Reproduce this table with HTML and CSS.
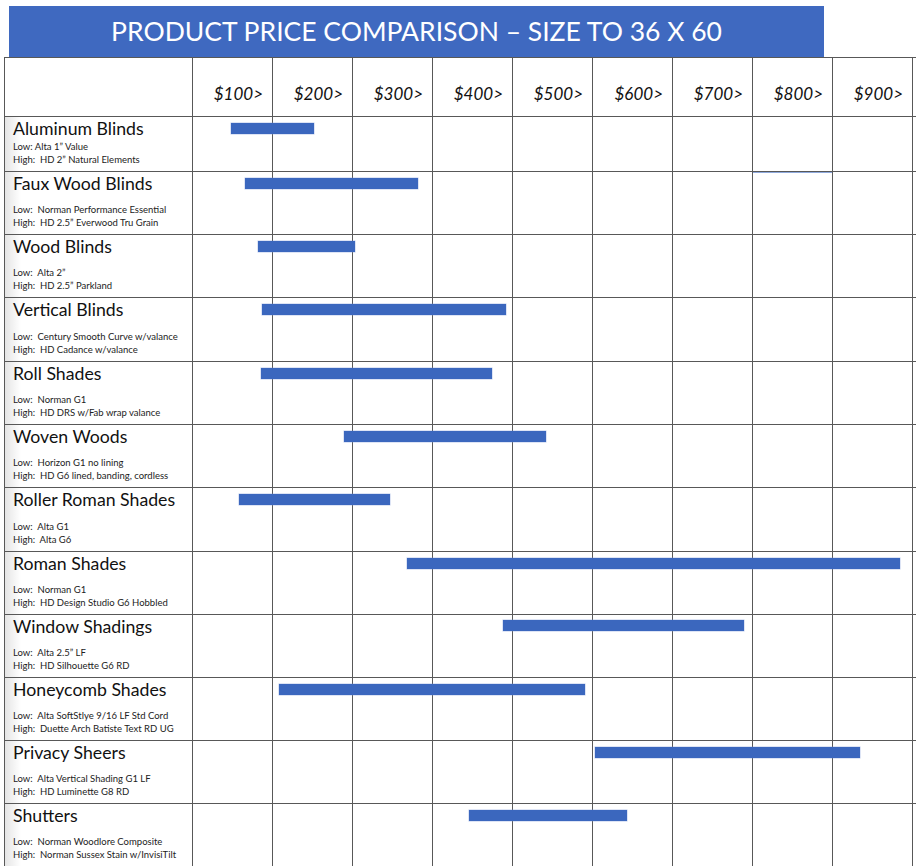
FILE: index.html
```html
<!DOCTYPE html>
<html>
<head>
<meta charset="utf-8">
<link rel="stylesheet" href="styles.css">
</head>
<body>
<div class="page">
  <h1 class="title">PRODUCT PRICE COMPARISON – SIZE TO 36 X 60</h1>
  <div class="chart">
    <div class="row head">
      <div class="label"></div>
      <div class="price">$100&gt;</div>
      <div class="price">$200&gt;</div>
      <div class="price">$300&gt;</div>
      <div class="price">$400&gt;</div>
      <div class="price">$500&gt;</div>
      <div class="price">$600&gt;</div>
      <div class="price">$700&gt;</div>
      <div class="price">$800&gt;</div>
      <div class="price end">$900&gt;</div>
    </div>

    <div class="row h55">
      <span class="bar" style="left:227px;width:83px"></span>
      <div class="label"><div class="name">Aluminum Blinds</div><div class="sub">Low: Alta 1” Value<br>High:&nbsp; HD 2” Natural Elements</div></div>
      <div class="cell"></div><div class="cell"></div><div class="cell"></div><div class="cell"></div><div class="cell"></div><div class="cell"></div><div class="cell"></div><div class="cell"></div><div class="cell end"></div>
    </div>

    <div class="row h63">
      <span class="bar" style="left:241px;width:173px"></span>
      <div class="label"><div class="name">Faux Wood Blinds</div><div class="sub">Low:&nbsp; Norman Performance Essential<br>High:&nbsp; HD 2.5” Everwood Tru Grain</div></div>
      <div class="cell"></div><div class="cell"></div><div class="cell"></div><div class="cell"></div><div class="cell"></div><div class="cell"></div><div class="cell"></div><div class="cell blue-top"></div><div class="cell end"></div>
    </div>

    <div class="row h63">
      <span class="bar" style="left:254px;width:97px"></span>
      <div class="label"><div class="name">Wood Blinds</div><div class="sub">Low:&nbsp; Alta 2”<br>High:&nbsp; HD 2.5” Parkland</div></div>
      <div class="cell"></div><div class="cell"></div><div class="cell"></div><div class="cell"></div><div class="cell"></div><div class="cell"></div><div class="cell"></div><div class="cell"></div><div class="cell end"></div>
    </div>

    <div class="row h64">
      <span class="bar" style="left:258px;width:244px"></span>
      <div class="label"><div class="name">Vertical Blinds</div><div class="sub">Low:&nbsp; Century Smooth Curve w/valance<br>High:&nbsp; HD Cadance w/valance</div></div>
      <div class="cell"></div><div class="cell"></div><div class="cell"></div><div class="cell"></div><div class="cell"></div><div class="cell"></div><div class="cell"></div><div class="cell"></div><div class="cell end"></div>
    </div>

    <div class="row h63">
      <span class="bar" style="left:257px;width:231px"></span>
      <div class="label"><div class="name">Roll Shades</div><div class="sub">Low:&nbsp; Norman G1<br>High:&nbsp; HD DRS w/Fab wrap valance</div></div>
      <div class="cell"></div><div class="cell"></div><div class="cell"></div><div class="cell"></div><div class="cell"></div><div class="cell"></div><div class="cell"></div><div class="cell"></div><div class="cell end"></div>
    </div>

    <div class="row h63">
      <span class="bar" style="left:340px;width:202px"></span>
      <div class="label"><div class="name">Woven Woods</div><div class="sub">Low:&nbsp; Horizon G1 no lining<br>High:&nbsp; HD G6 lined, banding, cordless</div></div>
      <div class="cell"></div><div class="cell"></div><div class="cell"></div><div class="cell"></div><div class="cell"></div><div class="cell"></div><div class="cell"></div><div class="cell"></div><div class="cell end"></div>
    </div>

    <div class="row h64">
      <span class="bar" style="left:235px;width:151px"></span>
      <div class="label"><div class="name">Roller Roman Shades</div><div class="sub">Low:&nbsp; Alta G1<br>High:&nbsp; Alta G6</div></div>
      <div class="cell"></div><div class="cell"></div><div class="cell"></div><div class="cell"></div><div class="cell"></div><div class="cell"></div><div class="cell"></div><div class="cell"></div><div class="cell end"></div>
    </div>

    <div class="row h63">
      <span class="bar" style="left:403px;width:493px"></span>
      <div class="label"><div class="name">Roman Shades</div><div class="sub">Low:&nbsp; Norman G1<br>High:&nbsp; HD Design Studio G6 Hobbled</div></div>
      <div class="cell"></div><div class="cell"></div><div class="cell"></div><div class="cell"></div><div class="cell"></div><div class="cell"></div><div class="cell"></div><div class="cell"></div><div class="cell end"></div>
    </div>

    <div class="row h63">
      <span class="bar bar-high" style="left:499px;width:241px"></span>
      <div class="label"><div class="name">Window Shadings</div><div class="sub">Low:&nbsp; Alta 2.5” LF<br>High:&nbsp; HD Silhouette G6 RD</div></div>
      <div class="cell"></div><div class="cell"></div><div class="cell"></div><div class="cell"></div><div class="cell"></div><div class="cell"></div><div class="cell"></div><div class="cell"></div><div class="cell end"></div>
    </div>

    <div class="row h63">
      <span class="bar" style="left:275px;width:306px"></span>
      <div class="label"><div class="name">Honeycomb Shades</div><div class="sub">Low:&nbsp; Alta SoftStlye 9/16 LF Std Cord<br>High:&nbsp; Duette Arch Batiste Text RD UG</div></div>
      <div class="cell"></div><div class="cell"></div><div class="cell"></div><div class="cell"></div><div class="cell"></div><div class="cell"></div><div class="cell"></div><div class="cell"></div><div class="cell end"></div>
    </div>

    <div class="row h63">
      <span class="bar" style="left:591px;width:265px"></span>
      <div class="label"><div class="name">Privacy Sheers</div><div class="sub">Low:&nbsp; Alta Vertical Shading G1 LF<br>High:&nbsp; HD Luminette G8 RD</div></div>
      <div class="cell"></div><div class="cell"></div><div class="cell"></div><div class="cell"></div><div class="cell"></div><div class="cell"></div><div class="cell"></div><div class="cell"></div><div class="cell end"></div>
    </div>

    <div class="row h63">
      <span class="bar" style="left:465px;width:158px"></span>
      <div class="label"><div class="name">Shutters</div><div class="sub">Low:&nbsp; Norman Woodlore Composite<br>High:&nbsp; Norman Sussex Stain w/InvisiTilt</div></div>
      <div class="cell"></div><div class="cell"></div><div class="cell"></div><div class="cell"></div><div class="cell"></div><div class="cell"></div><div class="cell"></div><div class="cell"></div><div class="cell end"></div>
    </div>
  </div>
</div>
</body>
</html>
```

FILE: styles.css
```css
html, body {
  margin: 0;
  padding: 0;
  background: #ffffff;
}

body {
  font-family: Lato, "Liberation Sans", sans-serif;
  color: #111111;
}

.page {
  width: 916px;
  height: 866px;
  overflow: hidden;
}

.title {
  margin: 6px 0 0 9px;
  width: 815px;
  height: 51px;
  box-sizing: border-box;
  padding-bottom: 1px;
  background: #3f69c0;
  color: #ffffff;
  font-size: 26.5px;
  font-weight: 400;
  display: flex;
  align-items: center;
  justify-content: center;
}

.chart {
  margin-left: 4px;
  border-top: 1px solid #585858;
}

.row {
  position: relative;
  display: grid;
  grid-template-columns: 188px repeat(8, 80px) 81px;
  border-bottom: 1px solid #585858;
  box-sizing: border-box;
}

.row > div {
  border-left: 1px solid #585858;
  box-sizing: border-box;
}

.row > div.end {
  border-right: 1px solid #585858;
}

.head { height: 59px; }
.h55 { height: 55px; }
.h63 { height: 63px; }
.h64 { height: 64px; }

.price {
  display: flex;
  justify-content: flex-end;
  align-items: flex-end;
  padding: 0 9px 12px 0;
  font-style: italic;
  font-size: 17px;
  color: #111111;
}

.label {
  display: flex;
  flex-direction: column;
  justify-content: space-between;
  padding: 2px 4px 5px 8px;
  background: linear-gradient(to right, rgba(0, 0, 0, 0.1), rgba(0, 0, 0, 0) 16px);
}

.head .label {
  background: none;
}

.name {
  font-size: 17.7px;
  line-height: 20px;
  color: #111111;
}

.sub {
  font-size: 9.5px;
  line-height: 12.5px;
  color: #222222;
}

.blue-top {
  box-shadow: inset 0 1px 0 #8fa9dc;
}

.bar {
  position: absolute;
  top: 6px;
  height: 11px;
  background: #3b67be;
  box-shadow: 0 0 0 0.5px rgba(120, 150, 215, 0.5);
  z-index: 1;
}

.bar-high {
  top: 5px;
}
```
